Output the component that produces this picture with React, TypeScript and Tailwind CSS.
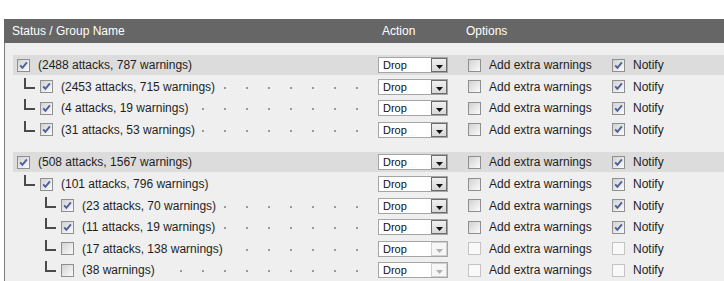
import React from "react";

type Row = {
  level: 0 | 1 | 2;
  checked: boolean;
  label: string;
  dots: boolean;
  disabled: boolean;
  notify: boolean;
};

const groups: Row[][] = [
  [
    { level: 0, checked: true, label: "(2488 attacks, 787 warnings)", dots: false, disabled: false, notify: true },
    { level: 1, checked: true, label: "(2453 attacks, 715 warnings)", dots: true, disabled: false, notify: true },
    { level: 1, checked: true, label: "(4 attacks, 19 warnings)", dots: true, disabled: false, notify: true },
    { level: 1, checked: true, label: "(31 attacks, 53 warnings)", dots: true, disabled: false, notify: true },
  ],
  [
    { level: 0, checked: true, label: "(508 attacks, 1567 warnings)", dots: false, disabled: false, notify: true },
    { level: 1, checked: true, label: "(101 attacks, 796 warnings)", dots: false, disabled: false, notify: true },
    { level: 2, checked: true, label: "(23 attacks, 70 warnings)", dots: true, disabled: false, notify: true },
    { level: 2, checked: true, label: "(11 attacks, 19 warnings)", dots: true, disabled: false, notify: true },
    { level: 2, checked: false, label: "(17 attacks, 138 warnings)", dots: true, disabled: true, notify: false },
    { level: 2, checked: false, label: "(38 warnings)", dots: true, disabled: true, notify: false },
  ],
];

function Checkbox({ checked, disabled }: { checked: boolean; disabled?: boolean }) {
  return (
    <div
      className={
        disabled
          ? "w-[13px] h-[13px] shrink-0 border border-[#c4c4c4] bg-[#f9f9f9] flex items-center justify-center"
          : "w-[13px] h-[13px] shrink-0 border border-[#8e8f8f] bg-linear-to-br from-[#d2d2d2] to-[#fbfbfb] flex items-center justify-center"
      }
    >
      {checked && (
        <svg width="9" height="9" viewBox="0 0 9 9">
          <path d="M1.2 4.3 L3.4 6.8 L7.9 1.4" stroke="#4b5e9e" strokeWidth="1.9" fill="none" />
        </svg>
      )}
    </div>
  );
}

function Select({ disabled }: { disabled: boolean }) {
  return (
    <div className="w-[70px] h-[16px] border border-[#a5a5a5] bg-white flex items-stretch">
      <span className="flex-1 pl-[4px] text-[11px] leading-[14px] text-[#111]">Drop</span>
      <div
        className={
          disabled
            ? "w-[16px] border border-[#cfcfcf] bg-[#f6f6f6] flex items-end justify-center pb-[2px]"
            : "w-[16px] border border-[#6c6c6c] bg-linear-to-b from-[#f0f0f0] to-[#d8d8d8] flex items-end justify-center pb-[2px]"
        }
      >
        <svg width="7" height="4" viewBox="0 0 7 4">
          <polygon points="0,0 7,0 3.5,4" fill={disabled ? "#b0b0b0" : "#111"} />
        </svg>
      </div>
    </div>
  );
}

const indentClass: Record<number, string> = {
  0: "pl-[4px]",
  1: "pl-[11px]",
  2: "pl-[32px]",
};

function TableRow({ row }: { row: Row }) {
  const dots = Array.from({ length: 16 });
  return (
    <div
      className={
        row.level === 0
          ? "flex items-center h-[20px] bg-[#dcdcdc]"
          : "flex items-center h-[20px]"
      }
    >
      <div className={"w-[365px] shrink-0 flex items-center h-full " + indentClass[row.level]}>
        {row.level > 0 && (
          <div className="w-[11px] h-[11px] self-start mt-[1px] mr-[5px] border-l-2 border-b-2 border-[#4a4a4a] shrink-0" />
        )}
        <Checkbox checked={row.checked} />
        <span className="ml-[8px] shrink-0 whitespace-nowrap">{row.label}</span>
        {row.dots && (
          <div className="flex-1 min-w-0 h-full overflow-hidden flex justify-end pr-[10px] ml-[7px]">
            {dots.map((_, i) => (
              <span key={i} className="w-[22px] h-full shrink-0 flex items-center justify-center">
                <span className="w-[2px] h-[2px] bg-[#9a9a9a] mt-[2px]" />
              </span>
            ))}
          </div>
        )}
      </div>
      <div className="w-[84px] shrink-0 flex items-center">
        <Select disabled={row.disabled} />
      </div>
      <div className="flex items-center pl-[6px]">
        <div className="w-[144px] flex items-center">
          <Checkbox checked={false} disabled={row.disabled} />
          <span className="ml-[8px] whitespace-nowrap">Add extra warnings</span>
        </div>
        <Checkbox checked={row.notify} disabled={row.disabled} />
        <span className="ml-[8px]">Notify</span>
      </div>
    </div>
  );
}

export default function App() {
  return (
    <div className="w-[724px] h-[281px] overflow-hidden bg-white pt-[19px] pl-[4px] font-['Liberation_Sans',Arial,sans-serif] text-[12px] text-[#1e1e1e]">
      <div className="h-[24px] bg-[#666666] flex items-center text-white text-[12px]">
        <div className="w-[374px] pl-[8px]">Status / Group Name</div>
        <div className="w-[84px] pl-[4px]">Action</div>
        <div className="pl-[4px]">Options</div>
      </div>
      <div className="h-[300px] border-l border-[#7d7d7d] bg-[#efefef] pt-[12px] pl-[8px] flex flex-col gap-[12.7px]">
        {groups.map((g, gi) => (
          <div key={gi} className="flex flex-col gap-[1.6px]">
            {g.map((r, ri) => (
              <TableRow key={ri} row={r} />
            ))}
          </div>
        ))}
      </div>
    </div>
  );
}
